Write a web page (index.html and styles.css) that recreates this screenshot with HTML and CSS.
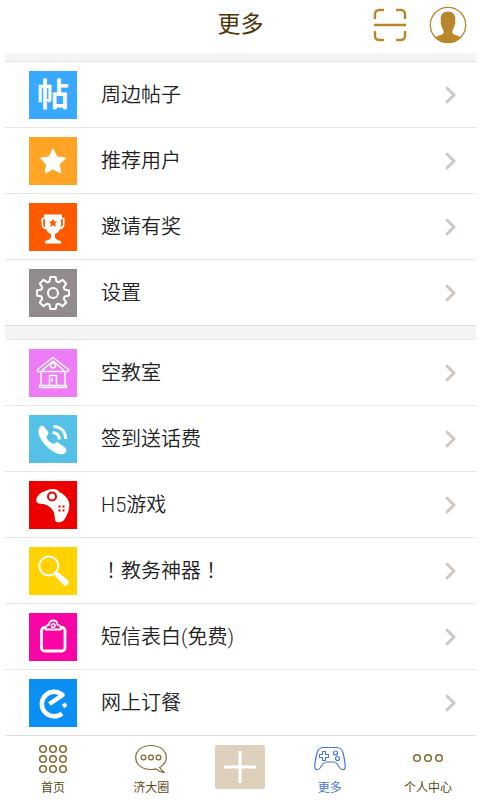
FILE: index.html
```html
<!DOCTYPE html>
<html lang="zh-CN">
<head>
<meta charset="utf-8">
<meta name="viewport" content="width=device-width, initial-scale=1">
<title>更多</title>
<link rel="stylesheet" href="styles.css">
</head>
<body>
<svg class="defs" aria-hidden="true">
  <symbol id="chevron" viewBox="0 0 12 18"><path d="M2 2l7 7-7 7" fill="none" stroke="currentColor" stroke-width="3" stroke-linecap="round" stroke-linejoin="round"/></symbol>
</svg>
<div class="app">
  <header class="header">
    <h1 class="title">更多</h1>
    <div class="actions">
      <button class="action" type="button" aria-label="扫一扫">
        <svg width="34" height="34" viewBox="0 0 34 34" fill="none" stroke="currentColor" stroke-width="2.400"><path d="M2 11V6a4 4 0 0 1 4-4h5M23 2h5a4 4 0 0 1 4 4v5M32 23v5a4 4 0 0 1-4 4h-5M11 32H6a4 4 0 0 1-4-4v-5M1 17h32"/></svg>
      </button>
      <button class="action" type="button" aria-label="个人资料">
        <svg width="38" height="38" viewBox="0 0 38 38"><circle cx="19" cy="19" r="17.7" fill="none" stroke="currentColor" stroke-width="1.3"/><path fill="currentColor" d="M19 5.500c5 0 7.500 3 7.300 8l-.2 2.500c.6.400.3 3-.7 3.800-.5 2-1.100 3.500-1.900 4.500v2.700c1.500 2.300 6 2.400 8.300 4.600A17.700 17.700 0 0 1 19 37a17.700 17.700 0 0 1-12.800-5.400c2.300-2.200 6.800-2.300 8.300-4.600v-2.700c-.8-1-1.400-2.500-1.900-4.500-1-.8-1.300-3.400-.7-3.800l-.2-2.500c-.2-5 2.300-8 7.300-8z"/></svg>
      </button>
    </div>
  </header>

  <main class="content">
    <ul class="group group-first">
      <li><a class="row" href="#nearby"><span class="tile tile-blue" aria-hidden="true">帖</span><span class="label">周边帖子</span><svg class="chevron"><use href="#chevron"/></svg></a></li>
      <li><a class="row" href="#users"><span class="tile tile-amber"><svg viewBox="0 0 48 48"><path fill="#fff" stroke="#fff" stroke-width="1.500" stroke-linejoin="round" d="M24 12.500l3.700 7.500 8.300 1.200-6 5.900 1.500 8.400-7.500-4-7.500 4 1.500-8.400-6-5.900 8.300-1.200z"/></svg></span><span class="label">推荐用户</span><svg class="chevron"><use href="#chevron"/></svg></a></li>
      <li><a class="row" href="#invite"><span class="tile tile-orange"><svg viewBox="0 0 48 48"><path fill="none" stroke="#fff" stroke-width="1.700" d="M17 15.500h-3.700v5.500c0 3 1.500 4.300 4.500 4.500M31 15.500h3.700v5.500c0 3-1.500 4.300-4.500 4.500"/><path fill="#fff" d="M15 11.500h18v3l-1 1v6c0 5.500-3 8-6 9.500v3c.5 2.500 3 3.500 6 4v2.500H16V38c3-.5 5.500-1.500 6-4v-3c-3-1.500-6-4-6-9.500v-6l-1-1z"/><path fill="#ff5a00" d="M24 15.500l1.300 2.900 3.100.3-2.300 2.100.7 3.100-2.800-1.600-2.800 1.600.7-3.100-2.300-2.100 3.100-.3z"/></svg></span><span class="label">邀请有奖</span><svg class="chevron"><use href="#chevron"/></svg></a></li>
      <li><a class="row" href="#settings"><span class="tile tile-gray"><svg viewBox="-24 -24 48 48" fill="none" stroke="#fff" stroke-width="2" stroke-linejoin="round"><path d="M-3.600-11.500L-2.600-16H2.600L3.600-11.500 5.600-10.700 9.500-13.200 13.200-9.500 10.700-5.600 11.500-3.600 16-2.600V2.600L11.500 3.600 10.700 5.600 13.200 9.500 9.500 13.200 5.600 10.700 3.600 11.500 2.600 16H-2.600L-3.600 11.500-5.600 10.700-9.500 13.200-13.200 9.500-10.700 5.600-11.500 3.600-16 2.600V-2.600L-11.500-3.600-10.700-5.600-13.200-9.500-9.500-13.200-5.600-10.700z"/><circle r="5"/></svg></span><span class="label">设置</span><svg class="chevron"><use href="#chevron"/></svg></a></li>
    </ul>

    <ul class="group">
      <li><a class="row" href="#classroom"><span class="tile tile-pink"><svg viewBox="0 0 48 48" fill="none" stroke="#fff" stroke-width="1.500" stroke-linejoin="round"><path d="M24 8.500l15.500 12v2h-31v-2zM24 12l-11 9.500M24 12l11 9.500M12 22.500V36M36 22.500V36M10.500 36.500h27v2h-27zM20.500 36v-9.500h7V36M23 29v4"/><circle cx="24" cy="16.500" r="2.500"/></svg></span><span class="label">空教室</span><svg class="chevron"><use href="#chevron"/></svg></a></li>
      <li><a class="row" href="#checkin"><span class="tile tile-sky"><svg viewBox="0 0 48 48"><path fill="#fff" d="M10.500 12.500c1.200-1.700 2.800-2.300 4.200-1.200l4.300 5.500c.8 1.500.4 2.500-1.500 4.500-.5 2.500 4 7.500 7.300 7.500 2-1.700 3.200-2 4.600-1.100l6.800 5.100c1.700 1.500 1.600 3.200.3 4.600-2.200 2.400-6 2.300-9.500.6-7.500-3.500-13.500-10-16.700-17-1.400-3.200-1.200-6.300.2-8.500z"/><g fill="none" stroke="#fff" stroke-width="3"><path d="M23.500 17.500c4 .3 6.500 2.700 7 7"/><path d="M24.500 11.500c7.500.3 12 5 12.300 12.500"/></g></svg></span><span class="label">签到送话费</span><svg class="chevron"><use href="#chevron"/></svg></a></li>
      <li><a class="row" href="#games"><span class="tile tile-red"><svg viewBox="0 0 48 48"><path fill="#fff" d="M7.500 17.500c1-3 4-6 7.500-7 3-1.300 6-2.500 9-2.400 3 0 5 .8 6.500 3.200 4.500 2 8.500 6 9.500 10.200 1 5-.8 11-4 16-2 3.500-4.500 4-7.500 3.800-2-.2-2.500-1.500-2.700-4-.2-4-.8-7.500-4-10.300-3-3-6.500-4-10.300-4.200-3.500-.2-5-2-4-5.300z"/><circle cx="23" cy="15.500" r="4" fill="#fff" stroke="#ee0000" stroke-width="2"/><path fill="#ee0000" d="M29.500 24.500h2v2h-2zM33.500 24.500h2v2h-2zM29.500 28.500h2v2h-2zM33.500 28.500h2v2h-2z"/></svg></span><span class="label">H5游戏</span><svg class="chevron"><use href="#chevron"/></svg></a></li>
      <li><a class="row" href="#academic"><span class="tile tile-yellow"><svg viewBox="0 0 48 48"><circle cx="19.800" cy="19" r="9.500" fill="none" stroke="#fff" stroke-width="2"/><path fill="#fff" d="M26 27l1.800-1.800 2.200.6 9 7.700c1 1 1.200 2 .3 3.200l-1.500 1.500c-1.200 1-2.300.8-3.300-.2L26.500 29.500z"/></svg></span><span class="label"><span class="mark" lang="zh-TW">！</span>教务神器<span class="mark" lang="zh-TW">！</span></span><svg class="chevron"><use href="#chevron"/></svg></a></li>
      <li><a class="row" href="#message"><span class="tile tile-magenta"><svg viewBox="0 0 48 48" fill="none" stroke="#fff"><rect x="12.500" y="14.500" width="23.500" height="23.500" rx="3" stroke-width="2.800"/><path fill="#f905a5" stroke-width="1.800" stroke-linejoin="round" d="M16.500 16.500c0-3 1.200-4.500 3.500-4.700 0-2.500 1.700-4.300 4.200-4.300s4.200 1.800 4.200 4.300c2.300.2 3.500 1.700 3.500 4.700z"/><circle cx="24.200" cy="12.500" r="1.800" stroke-width="1.500"/></svg></span><span class="label">短信表白(免费)</span><svg class="chevron"><use href="#chevron"/></svg></a></li>
      <li><a class="row" href="#food"><span class="tile tile-azure"><svg viewBox="0 0 48 48" fill="none" stroke="#fff" stroke-width="4.500" stroke-linejoin="round"><path d="M33 34.500A12.300 12.300 0 1 1 33.500 16L20.500 25"/><path d="M34.500 24.700l2.300 3.300" stroke-width="4"/></svg></span><span class="label">网上订餐</span><svg class="chevron"><use href="#chevron"/></svg></a></li>
    </ul>
  </main>

  <nav class="tabs">
    <a class="tab" href="#home">
      <svg class="tab-icon" viewBox="0 0 32 32" fill="none" stroke="currentColor" stroke-width="1.500"><circle cx="6" cy="6" r="3.300"/><circle cx="16" cy="6" r="3.300"/><circle cx="26" cy="6" r="3.300"/><circle cx="6" cy="16" r="3.300"/><circle cx="16" cy="16" r="3.300"/><circle cx="26" cy="16" r="3.300"/><circle cx="6" cy="26" r="3.300"/><circle cx="16" cy="26" r="3.300"/><circle cx="26" cy="26" r="3.300"/></svg>
      <span>首页</span>
    </a>
    <a class="tab" href="#circle">
      <svg class="tab-icon" viewBox="0 0 32 32" fill="none" stroke="currentColor" stroke-width="1.200" stroke-linejoin="round"><path d="M24.500 24.500C29 22 31.300 18.500 31.300 14.500 31.300 7.500 25 2.500 16 2.500S.7 7.500.7 14.500 7 26.500 16 26.500c1.700 0 3.300-.2 5-.6 2.200 2 5 3.500 8.500 3.800-2-1.500-3.500-3-5-5.200z"/><circle cx="8.500" cy="14.500" r="2.400"/><circle cx="16" cy="14.500" r="2.400"/><circle cx="23.500" cy="14.500" r="2.400"/></svg>
      <span>济大圈</span>
    </a>
    <button class="add" type="button" aria-label="发布">
      <svg width="32" height="32" viewBox="0 0 32 32" fill="none" stroke="#fff" stroke-width="3"><path d="M0 16h32M16 0v32"/></svg>
    </button>
    <a class="tab tab-active" href="#more" aria-current="page">
      <svg class="tab-icon" viewBox="0 0 32 32" fill="none" stroke="currentColor" stroke-width="1.200" stroke-linejoin="round"><path d="M10 4.500h12c4.500 0 6 1.500 7 5.500 1.300 5 2.200 9.500 2.200 13.500 0 4-3.200 4-5.200 1.500-2-2.700-3.300-6-6.500-6h-7c-3.200 0-4.500 3.300-6.500 6-2 2.500-5.200 2.500-5.200-1.500C.8 19.500 1.700 15 3 10c1-4 2.500-5.500 7-5.500z"/><path d="M8.500 8.500h3v3h3v3h-3v3h-3v-3h-3v-3h3z"/><circle cx="21.500" cy="10" r="2"/><circle cx="23.500" cy="15.500" r="2"/></svg>
      <span>更多</span>
    </a>
    <a class="tab" href="#profile">
      <svg class="tab-icon" viewBox="0 0 32 32" fill="none" stroke="currentColor" stroke-width="1.500"><circle cx="5" cy="15" r="3.300"/><circle cx="16" cy="15" r="3.300"/><circle cx="27" cy="15" r="3.300"/></svg>
      <span>个人中心</span>
    </a>
  </nav>
</div>
</body>
</html>
```
FILE: styles.css
```css
* {
  box-sizing: border-box;
}

body {
  margin: 0;
  background: #fff;
  color: #222;
  font-family: Roboto, "Noto Sans CJK SC", sans-serif;
  font-weight: 350;
}

a {
  color: inherit;
  text-decoration: none;
}

button {
  padding: 0;
  border: 0;
  background: none;
  color: inherit;
}

svg {
  display: block;
}

.defs {
  display: none;
}

.app {
  display: flex;
  flex-direction: column;
  min-height: 100vh;
  padding: 0 4px 0 5px;
}

.header {
  display: grid;
  grid-template-columns: 1fr auto 1fr;
  align-items: center;
  height: 53px;
  padding: 0 9px 4px;
}

.title {
  grid-column: 2;
  margin: 0;
  color: #4d3508;
  font-size: 23px;
  font-weight: 400;
  line-height: 32px;
}

.actions {
  display: flex;
  align-items: center;
  justify-content: flex-end;
  gap: 22px;
  color: #b8862b;
}

.content {
  flex: 1;
}

.group {
  margin: 0;
  padding: 13px 0 0;
  background: #f4f4f4;
  list-style: none;
}

.group-first {
  padding-top: 8px;
}

.group li {
  border-bottom: 1px solid #e6e6e6;
  background: #fff;
}

.group li:first-child {
  border-top: 1px solid #e6e6e6;
}

.group li:last-child {
  border-bottom-color: #dcdcdc;
}

.row {
  display: flex;
  align-items: center;
  height: 65px;
  padding: 0 19px 0 24px;
}

.tile {
  display: grid;
  place-items: center;
  width: 48px;
  height: 48px;
  color: #fff;
  font-size: 32px;
  font-weight: 700;
  line-height: 48px;
}

.tile svg {
  width: 48px;
  height: 48px;
}

.tile-blue { background: #38a9ff; }
.tile-amber { background: #ffa424; }
.tile-orange { background: #ff5a00; }
.tile-gray { background: #918c8b; }
.tile-pink { background: #ee7cf6; }
.tile-sky { background: #56c1e7; }
.tile-red { background: #ee0000; }
.tile-yellow { background: #ffd200; }
.tile-magenta { background: #f905a5; }
.tile-azure { background: #0a90f5; }

.label {
  flex: 1;
  margin-left: 24px;
  font-size: 20px;
  line-height: 30px;
}

.mark {
  font-family: "Noto Sans CJK TC", sans-serif;
}

.chevron {
  width: 12px;
  height: 18px;
  color: #cfc8c5;
}

.tabs {
  display: grid;
  grid-template-columns: 96fr 100fr 78fr 100fr 96fr;
  height: 64px;
  color: #80692f;
}

.tab {
  display: flex;
  flex-direction: column;
  align-items: center;
  gap: 4px;
  padding-top: 7px;
  font-size: 12px;
  font-weight: 400;
  line-height: 18px;
}

.tab span {
  color: #5c4814;
}

.tab-icon {
  width: 32px;
  height: 32px;
}

.tab-active,
.tab-active span {
  color: #4a74d8;
}

.add {
  display: grid;
  place-items: center;
  justify-self: center;
  width: 50px;
  height: 44px;
  margin-top: 9px;
  border-radius: 2px;
  background: #ddd0bc;
}
```
